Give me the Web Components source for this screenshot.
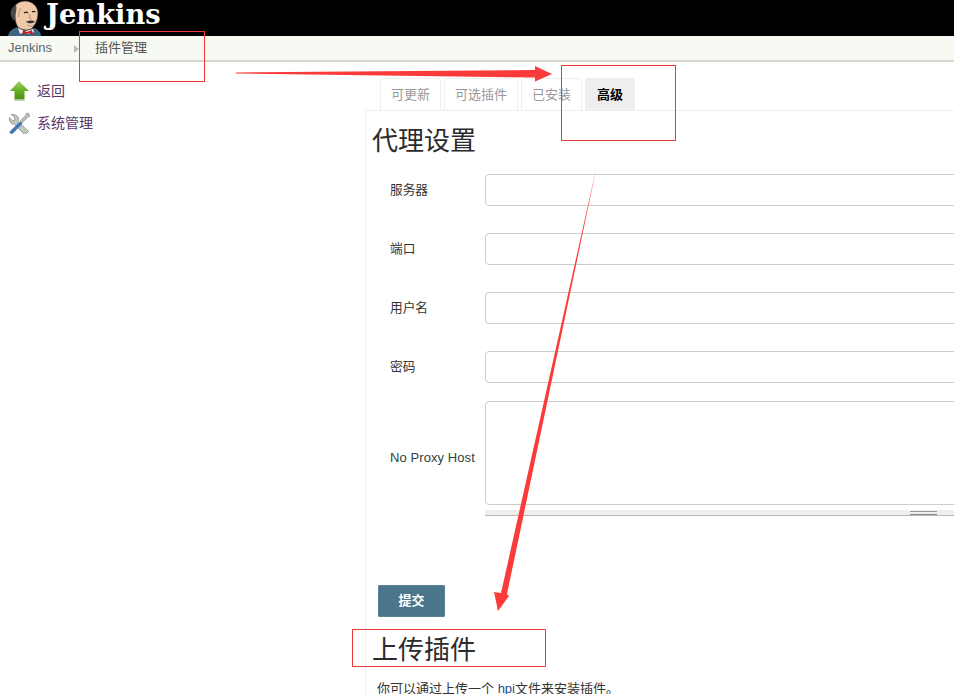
<!DOCTYPE html>
<html lang="zh"><head><meta charset="utf-8"><style>
html,body{margin:0;padding:0;background:#fff;overflow:hidden;height:694px}
body{font:13px "Liberation Sans","Noto Sans CJK SC",sans-serif;color:#333;position:relative}
</style></head><body>
<jk-page></jk-page>
<script>
const SANS='"Liberation Sans","Noto Sans CJK SC",sans-serif';
function def(name,css,html){customElements.define(name,class extends HTMLElement{constructor(){super();this.attachShadow({mode:'open'}).innerHTML='<style>'+css+'</style>'+html}})}
def('jk-header',`:host{display:flex;align-items:flex-start;height:36px;background:#000;padding-left:8px;gap:4px}
svg{flex:none}
span{font:bold 27.3px/32px "DejaVu Serif","Liberation Serif",serif;color:#fff;margin-top:-2px}`,
`<svg width="34" height="36" viewBox="8 0 34 36">
<path d="M8 36c1-5 5-8 10-9l8 3 8-2c4 1 7 4 7 8z" fill="#3d6480"/>
<path d="M18 28l7 3 8-2 1 3-5 2-4-2-5 2z" fill="#f4efe8"/>
<path d="M23 30l4 2 5-2 1 5-5-2-1 1-1-1-4 2z" fill="#c4201f"/>
<path d="M13 13C12 6 18 1 25 1c7 0 13 5 13 12 0 7-3 13-7 16-4 2-10 1-13-2-2-2-2-5-3-7-1 0-2-3-2-7z" fill="#efc9a8" stroke="#2a2522" stroke-width=".7"/>
<path d="M12 18C9 13 11 7 16 5c1 3 0 7-.5 10 0 2 0 3 .5 5-2 1-3 0-4-2z" fill="#4a4643"/>
<path d="M21 8c-2 3-3 6-2 9" stroke="#a87a5c" stroke-width=".7" fill="none"/>
<path d="M24 13c1.500-1 3-1 4 0M32 12c1-.8 2.500-.8 3.500 0" stroke="#222" stroke-width="1.200" fill="none"/>
<path d="M30 14l-.5 4 2 1" stroke="#a87a5c" stroke-width=".8" fill="none"/>
<path d="M26 22c2-1.500 6-2 9-.5-2 2-6 2.500-9 .5z" fill="#3a322d"/>
<path d="M27 25c2 1.500 5 1.500 7 0" stroke="#a5755c" stroke-width=".8" fill="none"/>
</svg><span>Jenkins</span>`);
def('jk-crumbs',`:host{display:flex;align-items:flex-start;height:24px;background:#f6faf2;border-bottom:2px solid #d3d7cf;font:13px ${SANS};color:#555;padding-left:8px;line-height:24px}
.j{color:#5c6672;width:67px;display:flex;align-items:center;justify-content:space-between;height:24px}
i{width:0;height:0;border-left:5px solid #bbb;border-top:4px solid transparent;border-bottom:4px solid transparent;margin-top:2px;margin-right:-4px}
.p{margin-left:20px}`,`<span class="j">Jenkins<i></i></span><span class="p">插件管理</span>`);
def('jk-task',`:host{display:flex;align-items:center;gap:7px;height:32px;padding-left:8px;font:14px ${SANS};color:#5c3566}
::slotted(svg){width:22px;height:24px;flex:none}`,`<slot name="i"></slot><slot></slot>`);
def('jk-side',`:host{display:block;width:365px;flex:none;padding-top:12px;box-sizing:border-box}`,`<slot></slot>`);
def('jk-tab',`:host{display:block;box-sizing:border-box;height:32px;border:1px solid #eee;border-bottom:0;border-radius:4px 4px 0 0;padding:0 10px;font:13px/31px ${SANS};color:#999}
:host([active]){background:#eee;border-color:#eee;color:#000;font-weight:bold;padding:0 11px}`,`<slot></slot>`);
def('jk-tabs',`:host{display:flex;gap:3px;padding-left:15px;height:32px}`,`<slot></slot>`);
def('jk-title',`:host{display:block;font:26px/30px "Liberation Serif","Noto Sans CJK SC",serif;color:#2b2b2b}`,`<slot></slot>`);
def('jk-field',`:host{display:flex;align-items:center;height:59px;font:12.7px ${SANS};color:#333}
label{width:95px;flex:none;padding-bottom:2px}
div{flex:1;box-sizing:border-box;height:32px;border:1px solid #ccc;border-radius:4px;background:#fff;margin-right:-4px}`,`<label><slot></slot></label><div></div>`);
def('jk-area',`:host{display:flex;align-items:center;height:115px;margin-top:5px;font:13px ${SANS};letter-spacing:.08px;color:#2f3f3f}
label{width:95px;flex:none;padding-bottom:2px}
.w{flex:1;margin-right:-4px;height:115px;display:flex;flex-direction:column}
.a{height:104px;box-sizing:border-box;border:1px solid #ccc;border-radius:4px;background:#fff}
.g{height:5px;margin-top:5px;background:#eee;border-bottom:1px solid #bbb9ae;box-sizing:content-box;display:flex;justify-content:flex-end;padding-right:21px}
.g i{display:block;width:27px;height:4px;border-top:1px solid #999;border-bottom:1px solid #888;margin-top:1px;box-sizing:border-box}`,
`<label><slot></slot></label><div class="w"><div class="a"></div><div class="g"><i></i></div></div>`);
def('jk-btn',`:host{display:block;width:67px;height:32px;box-sizing:border-box;background:#4b758b;border:1px solid #5a8296;border-radius:1px;color:#fff;font:bold 13px/30px ${SANS};text-align:center}`,`<slot></slot>`);
def('jk-panel',`:host{display:block;border:1px solid #eee;border-right:0;border-bottom:0;border-radius:4px 0 0 0;height:600px;padding:16px 0 0 6px;box-sizing:border-box;overflow:hidden}
.f{padding:0 0 0 18px;margin-top:3px}
.b{padding:69px 0 0 6px}
.u{margin-top:19px}
p{margin:14px 0 0 5px;font:13px/18px ${SANS};color:#333;white-space:nowrap}
a{color:#204a87}`,
`<jk-title>代理设置</jk-title>
<div class="f"><jk-field>服务器</jk-field><jk-field>端口</jk-field><jk-field>用户名</jk-field><jk-field>密码</jk-field><jk-area>No Proxy Host</jk-area></div>
<div class="b"><jk-btn>提交</jk-btn></div>
<jk-title class="u">上传插件</jk-title>
<p>你可以通过上传一个 <a>hpi</a>文件来安装插件。</p>`);
def('jk-main',`:host{display:block;flex:1;min-width:0;padding-top:16px}`,`<jk-tabs><jk-tab>可更新</jk-tab><jk-tab>可选插件</jk-tab><jk-tab>已安装</jk-tab><jk-tab active>高级</jk-tab></jk-tabs><jk-panel></jk-panel>`);
def('jk-notes',`:host{position:absolute;left:0;top:0;width:954px;height:694px;pointer-events:none}svg{display:block}`,
`<svg width="954" height="694" viewBox="0 0 954 694" fill="none">
<g stroke="#f03a3a" stroke-width="1"><rect x="79.500" y="31.500" width="125" height="50"/><rect x="561.500" y="65.500" width="114" height="75"/><rect x="352.500" y="629.500" width="193" height="37"/></g>
<path d="M236 72.500L535 70V66L552 74L535 81.500V77.500L236 73.500Z" fill="#fb3a3a"/>
<path d="M597 165L507 594L509 596L498 611L494 592L501 593Z" fill="#fb3a3a"/>
</svg>`);
def('jk-page',`:host{display:block;width:954px;height:694px;overflow:hidden}.r{display:flex}`,
`<jk-header></jk-header><jk-crumbs></jk-crumbs><div class="r"><jk-side>
<jk-task><svg slot="i" viewBox="8 78 22 24"><defs><linearGradient id="ga" x1="0" y1="0" x2="0" y2="1"><stop offset="0" stop-color="#a5d36a"/><stop offset=".55" stop-color="#63ad22"/><stop offset="1" stop-color="#4b8f12"/></linearGradient></defs><path d="M19 81L29 91H24.500V99.500H14.500V91H10Z" fill="url(#ga)"/><path d="M14 100.500h11" stroke="#c9cfc2" stroke-width="1"/></svg>返回</jk-task>
<jk-task><svg slot="i" viewBox="8 110 22 24"><path d="M11 114.500l3.500 2.500.5 3-3 .5-2.500-3c-.5 3 .5 5.500 3 6.500l2 .5 10.500 10.500 3.500-3.500-10.500-10.500.5-2c0-3-3-5-7.500-4.500z" fill="#c2c6c0" stroke="#85897f" stroke-width=".7"/><path d="M29 113.500l-2.500-.5-.5 2-6 6 2 2 6-6 2-.5z" fill="#b9bdb6" stroke="#85897f" stroke-width=".5"/><path d="M20 122l-9.500 9c-1 1-.5 2 .5 2.500s1.500 0 2.500-1L22 123.500z" fill="#3f78b5" stroke="#2d5f95" stroke-width=".6"/></svg>系统管理</jk-task>
</jk-side><jk-main></jk-main></div><jk-notes></jk-notes>`);
</script></body></html>
